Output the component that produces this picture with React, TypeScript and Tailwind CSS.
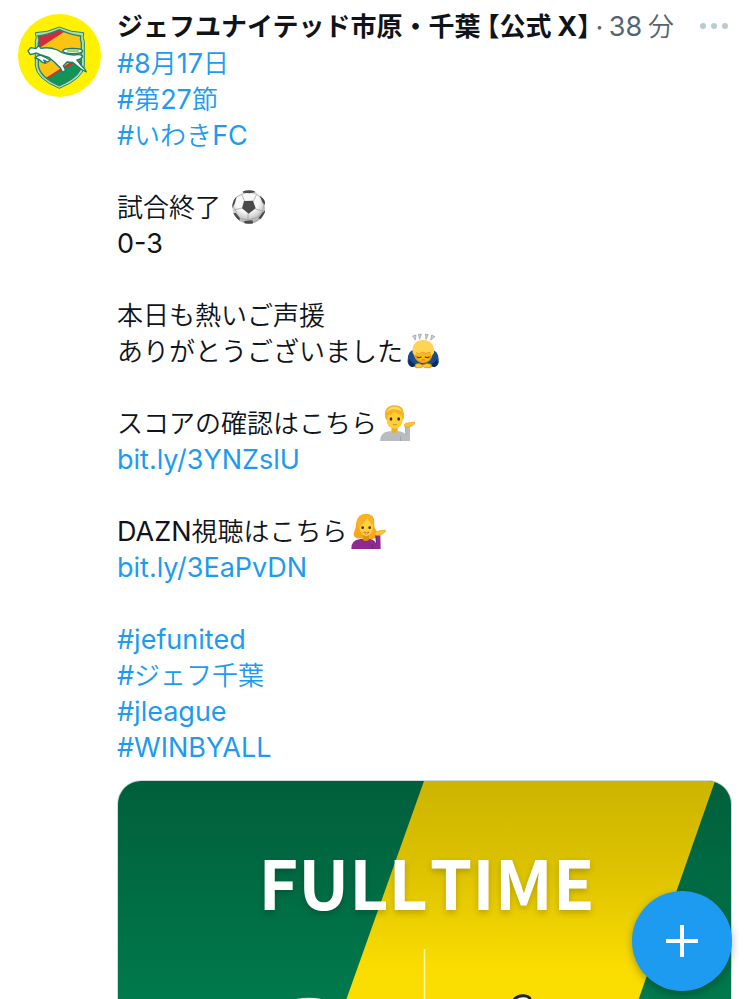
import { Fragment, type ReactNode } from 'react';

const ClubCrest = () => (
    <svg viewBox="24 26 249 249" className="block size-full" role="img" aria-label="JEF United">
        <defs>
            <clipPath id="shield">
                <path d="M84 92Q113 89 148 73Q183 89 212 92Q210 105 214 113V181Q211 213 148 241Q89 215 85 180V113Q89 103 84 92Z" />
            </clipPath>
        </defs>
        <circle cx="148.500" cy="150.500" r="124.500" fill="#fff100" />
        <path
            d="M76 82Q112 82 148 65Q184 82 221 82Q218 98 223 108V182Q219 220 148 249Q80 221 76 182V108Q81 98 76 82Z"
            fill="#b5dba8"
            stroke="#23876f"
            strokeWidth="3"
        />
        <g clipPath="url(#shield)">
            <path d="M70 60H230V250H70Z" fill="#fbc312" />
            <path d="M70 60H196L157 83L70 140Z" fill="#d12b3f" />
            <path d="M98 224L216 148V159L104 233Z" fill="#d12b3f" />
            <path d="M110 221L220 159V255H90Z" fill="#129457" />
        </g>
        <path
            d="M84 92Q113 89 148 73Q183 89 212 92Q210 105 214 113V181Q211 213 148 241Q89 215 85 180V113Q89 103 84 92Z"
            fill="none"
            stroke="#23876f"
            strokeWidth="4"
        />
        <g fill="#fff" stroke="#178068" strokeWidth="4" strokeLinejoin="round">
            <path d="M75 158Q82 149 94 150L121 164L113 170L101 164L108 174L97 171Q83 158 75 158Z" />
            <ellipse cx="188" cy="137" rx="30" ry="8" />
            <ellipse cx="189" cy="136" rx="18" ry="3" fill="#d6d36a" stroke="#69ab75" strokeWidth="2" />
            <path d="M54 137L62 127L78 130L86 121L93 129Q116 124 142 134Q165 149 192 149Q214 146 218 153Q215 161 201 164L214 181Q223 187 229 200Q214 194 206 186L188 171L171 170L160 181L167 195L158 201L151 188L133 170L116 156L91 148L79 143L61 148Z" />
        </g>
    </svg>
);

const SoccerBall = () => (
    <svg viewBox="18 13 108 108" className="mt-px ml-0.5 inline-block size-9 align-top" role="img" aria-label="サッカーボール">
        <defs>
            <radialGradient id="ball" cx="45%" cy="30%" r="70%">
                <stop offset="0.500" stopColor="#f8f8f8" />
                <stop offset="1" stopColor="#a8a8a8" />
            </radialGradient>
            <clipPath id="ballClip">
                <circle cx="78" cy="67" r="50" />
            </clipPath>
        </defs>
        <circle cx="78" cy="67" r="50" fill="url(#ball)" />
        <g clipPath="url(#ballClip)">
            <path
                d="M65 50L56 29M91 50L101 29M97 73L119 79M75 86V106M58 70L36 75M36 75L27 58M36 75L47 100L75 106L103 98L119 79L123 55M56 29L36 40M56 29L78 21L101 29L119 44"
                fill="none"
                stroke="#989898"
                strokeWidth="2"
            />
            <g fill="#4a4a4a">
                <path d="M63 49L90 48L98 71L77 87L57 71Z" />
                <path d="M58 14L88 13L98 23L80 26L60 24Z" />
                <path d="M28 48L41 36L35 57L25 75Z" />
                <path d="M110 33L128 48L130 63L119 55Z" />
                <path d="M28 86L38 85L50 99L50 113Z" />
                <path d="M64 109L88 107L91 118H64Z" />
                <path d="M118 84L132 72L114 104L106 101Z" />
            </g>
        </g>
    </svg>
);

const BowingPerson = () => (
    <svg viewBox="18 17 108 108" className="mt-px ml-0.5 inline-block size-9 align-top" role="img" aria-label="お辞儀する人">
        <g fill="#d0d0d0" stroke="#999" strokeWidth="2">
            <path d="M41 26L51 23L49 38Z" />
            <path d="M58 21L67 20L62 36Z" />
            <path d="M79 20L88 22L81 36Z" />
            <path d="M98 23L108 28L95 38Z" />
        </g>
        <path d="M48 69Q27 66 26 98Q24 112 37 119L69 114L108 119Q122 113 119 95Q117 69 98 69Z" fill="#174d91" />
        <path d="M30 94Q40 110 58 113L40 119Q25 112 30 94ZM114 94Q105 110 88 113L106 119Q120 112 114 94Z" fill="#08295a" />
        <path d="M42 70Q41 43 72 40Q103 43 103 70L99 89Q92 107 72 108Q51 105 45 86Z" fill="#e79c12" />
        <path d="M51 76Q72 70 95 76L93 91Q87 103 72 104Q57 101 52 88Z" fill="#fbb91d" />
        <path d="M41 77Q37 42 70 38Q109 39 105 77L97 87L94 74Q80 83 70 74Q60 87 52 76L48 86Z" fill="#ffd353" />
        <path d="M52 76Q61 84 70 74Q80 83 94 74" fill="none" stroke="#d99012" strokeWidth="2" />
        <path d="M55 89Q60 93 66 89M79 89Q85 93 90 89" fill="none" stroke="#6c3710" strokeWidth="4" strokeLinecap="round" />
        <path d="M69 98Q73 96 77 98" fill="none" stroke="#9d5b12" strokeWidth="2" strokeLinecap="round" />
        <path d="M48 112Q59 104 71 113Q83 104 98 112L95 121H78L72 117L66 121H50Z" fill="#ffc724" stroke="#d3820b" strokeWidth="2" />
    </svg>
);

const TippingPerson = () => (
    <svg viewBox="15 17 108 108" className="mt-px ml-0.5 inline-block size-9 align-top" role="img" aria-label="案内する人">
        <path d="M18 125Q18 100 45 96H75Q91 98 95 107L93 80L108 82L108 125Z" fill="#b9bcc0" />
        <path d="M80 125V111M94 83L96 108" fill="none" stroke="#8e9297" strokeWidth="2" />
        <path d="M53 81H71V97Q62 104 52 97Z" fill="#eeb01c" />
        <path d="M37 48Q36 24 61 22Q89 25 86 58Q86 87 62 88Q37 87 38 60Z" fill="#ffcf35" />
        <path d="M35 60Q26 24 55 18Q91 15 90 47Q90 60 86 64L83 46Q66 45 60 36Q55 47 43 47L39 62Z" fill="#f8b322" />
        <path d="M38 38Q45 21 64 22Q80 24 84 36Q70 29 56 30Q45 32 38 38Z" fill="#ffda63" />
        <g fill="#51280d">
            <ellipse cx="51" cy="59" rx="4" ry="5" />
            <ellipse cx="74" cy="59" rx="4" ry="5" />
        </g>
        <path d="M58 76Q63 78 68 76" fill="none" stroke="#b06a1c" strokeWidth="2" strokeLinecap="round" />
        <path d="M93 83Q88 75 96 72L107 70L123 68Q127 71 118 76Q113 82 104 83Z" fill="#ffc525" stroke="#e6a11c" strokeWidth="2" />
    </svg>
);

const TippingWoman = () => (
    <svg viewBox="18 17 108 108" className="mt-px ml-0.5 inline-block size-9 align-top" role="img" aria-label="案内する女性">
        <path d="M38 93Q24 86 31 72Q37 62 37 45Q41 20 67 19Q92 21 91 45Q89 60 97 70Q107 88 85 96Z" fill="#f5a91a" />
        <path d="M22 125Q20 99 49 95H79Q92 98 96 107L94 82L109 84L110 125Z" fill="#8e2b91" />
        <path d="M85 125V111M95 84L98 108" fill="none" stroke="#651b70" strokeWidth="2" />
        <path d="M57 80H75V98Q65 104 57 98Z" fill="#df940d" />
        <path d="M44 48Q49 29 66 29Q86 31 87 54Q87 83 67 87Q45 82 44 48Z" fill="#ffd13e" />
        <path d="M43 62Q60 50 70 32Q75 46 89 56Q92 23 65 20Q38 22 40 50Z" fill="#f9b425" />
        <g fill="#51280d">
            <ellipse cx="56" cy="61" rx="4" ry="4" />
            <ellipse cx="77" cy="61" rx="4" ry="4" />
        </g>
        <path d="M59 74Q67 77 75 74Q72 80 67 80Q62 80 59 74Z" fill="#fff" stroke="#bf4d25" strokeWidth="2" />
        <path d="M95 84Q89 76 97 73L107 70L124 69Q128 72 119 77Q114 83 104 84Z" fill="#ffc525" stroke="#e6a11c" strokeWidth="2" />
    </svg>
);

// Latin runs are set slightly larger than kana and kanji
const Mixed = ({ children }: { children: string }) => (
    <>
        {children.split(/([\x21-\x7e]+)/).map((part, index) => (
            <Fragment key={index}>
                {index % 2 === 1 ? (
                    <span className="font-['Inter','Liberation_Sans',sans-serif] text-[27px] font-normal in-[.font-bold]:font-bold">
                        {part}
                    </span>
                ) : (
                    part
                )}
            </Fragment>
        ))}
    </>
);

const Line = ({ children }: { children?: ReactNode }) => <p className="h-9 whitespace-nowrap">{children}</p>;

const TextLink = ({ children }: { children: string }) => (
    <Line>
        <a href="#" className="text-[#1d9bf0]">
            <Mixed>{children}</Mixed>
        </a>
    </Line>
);

const MatchCard = () => (
    <a
        href="#"
        aria-label="試合結果"
        className="relative mt-4 block h-[345px] shrink-0 overflow-hidden rounded-3xl border border-[#cfd9de]"
    >
        <svg viewBox="0 0 613 345" preserveAspectRatio="none" className="absolute inset-0 size-full" aria-hidden="true">
            <defs>
                <linearGradient id="green" x1="0" y1="0" x2="0" y2="218" gradientUnits="userSpaceOnUse">
                    <stop offset="0" stopColor="#005f3c" />
                    <stop offset="1" stopColor="#00794c" />
                </linearGradient>
                <linearGradient id="yellow" x1="0" y1="0" x2="0" y2="218" gradientUnits="userSpaceOnUse">
                    <stop offset="0" stopColor="#cdb500" />
                    <stop offset="0.400" stopColor="#dcc200" />
                    <stop offset="0.850" stopColor="#fadc00" />
                    <stop offset="1" stopColor="#fbde00" />
                </linearGradient>
            </defs>
            <path d="M0 0H613V345H0Z" fill="url(#green)" />
            <path d="M306 0H597L477 345H184Z" fill="url(#yellow)" />
            <path d="M306.500 169V345" stroke="#fff8b0" strokeWidth="1.500" />
            <ellipse cx="191" cy="247" rx="44" ry="29" fill="#dce9e2" />
            <path d="M393 230Q394 216 405 216Q414 216 412 224Q405 218 401 232Z" fill="#fff" stroke="#1c2447" strokeWidth="3" />
        </svg>
        <h2 className="relative flex justify-center gap-0.5 pt-14 pl-1 text-[68px] leading-[88px] font-bold text-white [text-shadow:0_3px_6px_rgb(0_0_0/0.2)]">
            <span>FULL</span> <span>TIME</span>
        </h2>
    </a>
);

const App = () => {
    return (
        <main className="h-screen overflow-hidden bg-white font-['Noto_Sans_CJK_JP',sans-serif] text-[#0f1419]">
            <article className="flex gap-4 pt-2 pr-[18px] pl-[18px]">
                <a href="#" className="mt-1.5 size-[83px] shrink-0">
                    <ClubCrest />
                </a>
                <div className="flex min-w-0 flex-1 flex-col">
                    <header className="flex h-9 items-center justify-between text-[26px] leading-9 whitespace-nowrap">
                        <div className="flex items-center gap-0.5">
                            <a href="#" className="font-bold">
                                ジェフユナイテッド市原・千葉{' '}
                                <span className="[font-feature-settings:'halt']">
                                    <Mixed>【公式 X】</Mixed>
                                </span>
                            </a>
                            <span className="text-[#536471]">·</span>
                            <time className="font-[350] text-[#536471]">
                                <Mixed>38 分</Mixed>
                            </time>
                        </div>
                        <button type="button" aria-label="もっと見る" className="flex items-center gap-[5px] px-1">
                            <span className="size-1.5 rounded-full bg-[#b9cad3]" />
                            <span className="size-1.5 rounded-full bg-[#b9cad3]" />
                            <span className="size-1.5 rounded-full bg-[#b9cad3]" />
                        </button>
                    </header>
                    <div className="text-[26px] leading-9 font-[350]">
                        <TextLink>#8月17日</TextLink>
                        <TextLink>#第27節</TextLink>
                        <TextLink>#いわきFC</TextLink>
                        <Line />
                        <Line>
                            試合終了 <SoccerBall />
                        </Line>
                        <Line>
                            <Mixed>0-3</Mixed>
                        </Line>
                        <Line />
                        <Line>本日も熱いご声援</Line>
                        <Line>
                            ありがとうございました
                            <BowingPerson />
                        </Line>
                        <Line />
                        <Line>
                            スコアの確認はこちら
                            <TippingPerson />
                        </Line>
                        <TextLink>bit.ly/3YNZslU</TextLink>
                        <Line />
                        <Line>
                            <Mixed>DAZN視聴はこちら</Mixed>
                            <TippingWoman />
                        </Line>
                        <TextLink>bit.ly/3EaPvDN</TextLink>
                        <Line />
                        <TextLink>#jefunited</TextLink>
                        <TextLink>#ジェフ千葉</TextLink>
                        <TextLink>#jleague</TextLink>
                        <TextLink>#WINBYALL</TextLink>
                    </div>
                    <MatchCard />
                </div>
            </article>
            <button
                type="button"
                aria-label="ポストする"
                className="fixed right-[18px] bottom-2 flex size-[100px] items-center justify-center rounded-full bg-[#1d9bf0] shadow-[0_3px_8px_rgb(0_0_0/0.3)]"
            >
                <svg viewBox="0 0 32 32" className="size-8" aria-hidden="true">
                    <path d="M16 0V32M0 16H32" stroke="#fff" strokeWidth="4" />
                </svg>
            </button>
        </main>
    );
};

export default App;
